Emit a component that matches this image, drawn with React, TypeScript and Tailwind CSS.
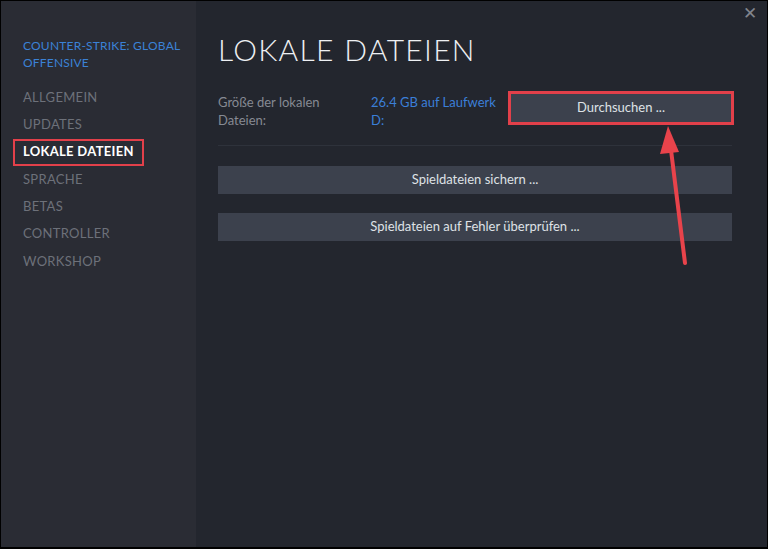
import React from "react";

const navItems = ["ALLGEMEIN", "UPDATES", "LOKALE DATEIEN", "SPRACHE", "BETAS", "CONTROLLER", "WORKSHOP"];

export default function App() {
  return (
    <div className="relative w-[768px] h-[549px] flex bg-black p-[1px] pb-[2px] font-['Lato',_'Liberation_Sans',_sans-serif]">
      {/* Sidebar */}
      <aside className="w-[195px] shrink-0 bg-[#2a2c34] pt-[36px]">
        <div className="pl-[22px] text-[12px] leading-[17px] text-[#3b82d6] tracking-[0.2px]">
          COUNTER-STRIKE: GLOBAL
          <br />
          OFFENSIVE
        </div>
        <nav className="mt-[13px] flex flex-col">
          {navItems.map((item) => {
            const active = item === "LOKALE DATEIEN";
            return (
              <div key={item} className="h-[27.3px] flex items-center pl-[12px]">
                <span
                  className={
                    active
                      ? "px-[8px] h-[27px] flex items-center border-2 border-[#e2404a] text-[13px] font-bold text-white tracking-[0.3px]"
                      : "px-[10px] text-[13px] text-[#6d717a] tracking-[0.3px]"
                  }
                >
                  {item}
                </span>
              </div>
            );
          })}
        </nav>
      </aside>

      {/* Main */}
      <main className="relative flex-1 bg-[#23262e] pl-[22px] pr-[35px] pt-[31px]">
        <button className="absolute right-[10px] top-[3px] text-[#80848c] text-[17px] leading-none">✕</button>
        <h1 className="text-[30px] font-light text-[#eef0f3] tracking-[1.3px] leading-[34px]">LOKALE DATEIEN</h1>

        <div className="mt-[26px] flex items-start">
          <div className="w-[153px] text-[13px] leading-[18px] text-[#868a93] pt-[1px]">
            Größe der lokalen
            <br />
            Dateien:
          </div>
          <div className="w-[137px] text-[13px] leading-[18px] text-[#3b7fd8] pt-[1px]">
            26.4 GB auf Laufwerk
            <br />
            D:
          </div>
          <div className="-mt-[1px] -mr-[2px] flex-1 border-[3px] border-[#e2404a]">
            <div className="h-[28px] bg-[#3c414d] flex items-center justify-center text-[13px] text-[#dfe2e6]">
              Durchsuchen ...
            </div>
          </div>
        </div>

        <div className="mt-[16px] h-px bg-[#2e323b]" />

        <div className="mt-[20px] flex flex-col gap-[19px]">
          <div className="h-[28px] bg-[#3c414d] flex items-center justify-center text-[13px] text-[#dfe2e6]">
            Spieldateien sichern ...
          </div>
          <div className="h-[28px] bg-[#3c414d] flex items-center justify-center text-[13px] text-[#dfe2e6]">
            Spieldateien auf Fehler überprüfen ...
          </div>
        </div>
      </main>

      {/* Annotation arrow */}
      <svg className="absolute left-0 top-0 pointer-events-none" width="768" height="549">
        <line x1="685" y1="263" x2="671" y2="150" stroke="#e8434b" strokeWidth="4" strokeLinecap="round" />
        <polygon points="668,126 660,154 679,152" fill="#e8434b" />
      </svg>
    </div>
  );
}
